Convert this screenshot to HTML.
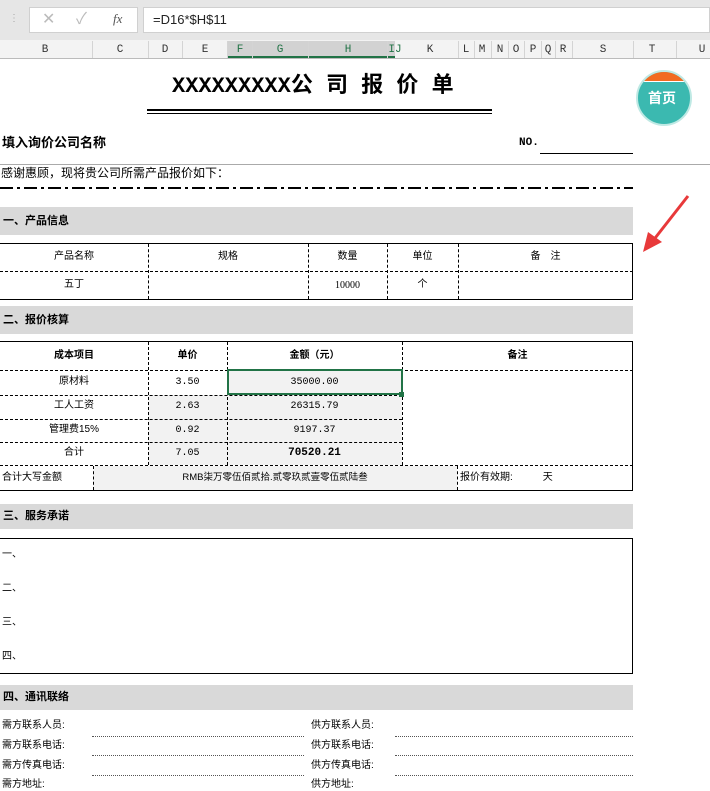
<!DOCTYPE html>
<html><head><meta charset="utf-8"><style>
*{margin:0;padding:0;box-sizing:border-box}
body{width:710px;height:791px;overflow:hidden;background:#fff;position:relative;font-family:"Liberation Sans","Noto Sans CJK SC",sans-serif;font-size:11px;color:#000}
.a{position:absolute}
.t{position:absolute;white-space:nowrap;line-height:1}
.sec{position:absolute;left:0;width:633px;background:#d9d9d9;font-weight:bold;font-size:11px;padding-left:3px}
.hd{position:absolute;top:44px;font-family:"Liberation Mono",monospace;font-size:11px;color:#333;transform:translateX(-50%)}
.sp{position:absolute;top:41px;height:17px;border-left:1px solid #d4d4d4}
.vd{position:absolute;border-left:1px dashed #000}
.hdl{position:absolute;border-top:1px dashed #000}
.c{position:absolute;text-align:center;font-size:10px;line-height:1}
.ul{position:absolute;border-top:1px dotted #555}
</style></head><body>
<div class="a" style="left:0;top:0;width:710px;height:40px;background:#e6e6e6"></div>
<div class="a" style="left:29px;top:7px;width:109px;height:26px;background:#fff;border:1px solid #d0d0d0"></div>
<div class="t" style="left:42px;top:12px;font-size:16px;color:#bbb">✕</div>
<div class="t" style="left:76px;top:12px;font-size:16px;color:#bbb">✓</div>
<div class="t" style="left:113px;top:12px;font-size:13px;font-style:italic;font-family:'Liberation Serif',serif;color:#555">fx</div>
<div class="a" style="left:143px;top:7px;width:567px;height:26px;background:#fff;border:1px solid #d0d0d0"></div>
<div class="t" style="left:153px;top:13px;font-size:13px;color:#222">=D16*$H$11</div>
<div class="t" style="left:9px;top:14px;color:#aaa;font-size:10px">⋮</div>
<div class="a" style="left:0;top:40px;width:710px;height:19px;background:#f3f3f3;border-bottom:1px solid #bbb"></div>
<div class="a" style="left:227px;top:41px;width:168px;height:17px;background:#d2d2d2;border-bottom:2px solid #217346"></div>
<div class="sp" style="left:92px"></div><div class="sp" style="left:148px"></div><div class="sp" style="left:182px"></div><div class="sp" style="left:227px"></div><div class="sp" style="left:252px"></div><div class="sp" style="left:308px"></div><div class="sp" style="left:387px"></div><div class="sp" style="left:458px"></div><div class="sp" style="left:474px"></div><div class="sp" style="left:491px"></div><div class="sp" style="left:508px"></div><div class="sp" style="left:524px"></div><div class="sp" style="left:541px"></div><div class="sp" style="left:555px"></div><div class="sp" style="left:572px"></div><div class="sp" style="left:633px"></div><div class="sp" style="left:676px"></div>
<div class="hd" style="left:45px">B</div><div class="hd" style="left:120px">C</div><div class="hd" style="left:165px">D</div><div class="hd" style="left:205px">E</div><div class="hd" style="left:240px;color:#217346">F</div><div class="hd" style="left:280px;color:#217346">G</div><div class="hd" style="left:348px;color:#217346">H</div><div class="hd" style="left:395px;color:#217346">IJ</div><div class="hd" style="left:430px">K</div><div class="hd" style="left:466px">L</div><div class="hd" style="left:482px">M</div><div class="hd" style="left:500px">N</div><div class="hd" style="left:516px">O</div><div class="hd" style="left:533px">P</div><div class="hd" style="left:548px">Q</div><div class="hd" style="left:563px">R</div><div class="hd" style="left:603px">S</div><div class="hd" style="left:652px">T</div><div class="hd" style="left:702px">U</div>
<div class="t" style="left:172px;top:76px;font-size:22px;font-weight:bold;font-family:'Liberation Mono','Noto Sans CJK SC',monospace">XXXXXXXXX公 司 报 价 单</div>
<div class="a" style="left:147px;top:109px;width:345px;height:5px;border-top:2px solid #000;border-bottom:1px solid #000"></div>
<div class="a" style="left:636px;top:70px;width:56px;height:56px;border-radius:50%;background:#3bb9b0;border:2px solid #bfe9e4;overflow:hidden">
<div class="a" style="left:0;top:0;width:56px;height:10px;background:#f26b21;border-bottom:1px solid #fff"></div></div>
<div class="t" style="left:648px;top:91px;font-size:14px;font-weight:bold;color:#fff">首页</div>
<div class="t" style="left:2px;top:136px;font-size:13px;font-weight:bold">填入询价公司名称</div>
<div class="t" style="left:519px;top:138px;font-size:11px;font-weight:bold;font-family:'Liberation Mono',monospace">NO.</div>
<div class="a" style="left:540px;top:153px;width:93px;border-top:1px solid #000"></div>
<div class="a" style="left:0;top:164px;width:710px;border-top:1px solid #aaa"></div>
<div class="t" style="left:1px;top:167px;font-size:12px">感谢惠顾，现将贵公司所需产品报价如下：</div>
<div class="a" style="left:0;top:187px;width:633px;height:2px;background:repeating-linear-gradient(90deg,#000 0 13px,#fff 13px 17px,#000 17px 20px,#fff 20px 24px)"></div>
<div class="sec" style="top:207px;height:28px;line-height:28px">一、产品信息</div>
<div class="a" style="left:0;top:243px;width:633px;height:57px;border:1px solid #000;border-left:none"></div>
<div class="hdl" style="left:0;top:271px;width:633px"></div>
<div class="vd" style="left:148px;top:244px;height:55px"></div><div class="vd" style="left:308px;top:244px;height:55px"></div><div class="vd" style="left:387px;top:244px;height:55px"></div><div class="vd" style="left:458px;top:244px;height:55px"></div>
<div class="c" style="left:0;width:148px;top:252px">产品名称</div><div class="c" style="left:148px;width:160px;top:252px">规格</div><div class="c" style="left:308px;width:79px;top:252px">数量</div><div class="c" style="left:387px;width:71px;top:252px">单位</div><div class="c" style="left:458px;width:175px;top:252px">备　注</div>
<div class="c" style="left:0;width:148px;top:280px">五丁</div><div class="c" style="left:308px;width:79px;top:281px;font-family:'Liberation Serif',serif">10000</div><div class="c" style="left:387px;width:71px;top:280px">个</div>
<svg class="a" style="left:640px;top:192px" width="52" height="64"><line x1="48" y1="4" x2="12" y2="50" stroke="#e8393a" stroke-width="3"/><polygon points="3,60 8,40 22,50" fill="#e8393a"/></svg>
<div class="sec" style="top:306px;height:28px;line-height:28px">二、报价核算</div>
<div class="a" style="left:148px;top:395px;width:254px;height:70px;background:#f2f2f2"></div>
<div class="a" style="left:227px;top:370px;width:175px;height:25px;background:#f2f2f2"></div>
<div class="a" style="left:93px;top:466px;width:364px;height:24px;background:#f2f2f2"></div>
<div class="a" style="left:0;top:341px;width:633px;height:150px;border:1px solid #000;border-left:none"></div>
<div class="hdl" style="left:0;top:370px;width:633px"></div><div class="hdl" style="left:0;top:395px;width:402px"></div><div class="hdl" style="left:0;top:419px;width:402px"></div><div class="hdl" style="left:0;top:442px;width:402px"></div><div class="hdl" style="left:0;top:465px;width:633px"></div>
<div class="vd" style="left:148px;top:342px;height:123px"></div><div class="vd" style="left:227px;top:342px;height:123px"></div><div class="vd" style="left:402px;top:342px;height:123px"></div>
<div class="vd" style="left:93px;top:466px;height:24px"></div><div class="vd" style="left:457px;top:466px;height:24px"></div>
<div class="a" style="left:227px;top:369px;width:176px;height:26px;border:2px solid #217346"></div>
<div class="a" style="left:399px;top:392px;width:5px;height:5px;background:#217346"></div>
<div class="c" style="left:0;width:148px;top:351px;font-weight:bold">成本项目</div><div class="c" style="left:148px;width:79px;top:351px;font-weight:bold">单价</div><div class="c" style="left:227px;width:175px;top:351px;font-weight:bold">金额（元）</div><div class="c" style="left:402px;width:231px;top:351px;font-weight:bold">备注</div>
<div class="c" style="left:0;width:148px;top:377px">原材料</div><div class="c" style="left:0;width:148px;top:401px">工人工资</div><div class="c" style="left:0;width:148px;top:425px">管理费15%</div><div class="c" style="left:0;width:148px;top:448px">合计</div>
<div class="c" style="left:148px;width:79px;top:378px;font-family:'Liberation Mono',monospace">3.50</div><div class="c" style="left:148px;width:79px;top:402px;font-family:'Liberation Mono',monospace">2.63</div><div class="c" style="left:148px;width:79px;top:426px;font-family:'Liberation Mono',monospace">0.92</div><div class="c" style="left:148px;width:79px;top:449px;font-family:'Liberation Mono',monospace">7.05</div>
<div class="c" style="left:227px;width:175px;top:378px;font-family:'Liberation Mono',monospace">35000.00</div><div class="c" style="left:227px;width:175px;top:402px;font-family:'Liberation Mono',monospace">26315.79</div><div class="c" style="left:227px;width:175px;top:426px;font-family:'Liberation Mono',monospace">9197.37</div><div class="c" style="left:227px;width:175px;top:448px;font-family:'Liberation Mono',monospace;font-weight:bold;font-size:11px">70520.21</div>
<div class="t" style="left:2px;top:473px;font-size:10px">合计大写金额</div>
<div class="c" style="left:93px;width:364px;top:473px;font-size:9.5px">RMB柒万零伍佰贰拾.贰零玖贰壹零伍贰陆叁</div>
<div class="t" style="left:460px;top:473px;font-size:10px">报价有效期:　　　天</div>
<div class="sec" style="top:504px;height:25px;line-height:25px">三、服务承诺</div>
<div class="a" style="left:0;top:538px;width:633px;height:136px;border:1px solid #000;border-left:none"></div>
<div class="t" style="left:2px;top:550px;font-size:10px">一、</div><div class="t" style="left:2px;top:584px;font-size:10px">二、</div><div class="t" style="left:2px;top:618px;font-size:10px">三、</div><div class="t" style="left:2px;top:652px;font-size:10px">四、</div>
<div class="sec" style="top:685px;height:25px;line-height:25px">四、通讯联络</div>
<div class="t" style="left:2px;top:721px;font-size:10px">需方联系人员:</div><div class="t" style="left:2px;top:741px;font-size:10px">需方联系电话:</div><div class="t" style="left:2px;top:761px;font-size:10px">需方传真电话:</div><div class="t" style="left:2px;top:780px;font-size:10px">需方地址:</div>
<div class="t" style="left:311px;top:721px;font-size:10px">供方联系人员:</div><div class="t" style="left:311px;top:741px;font-size:10px">供方联系电话:</div><div class="t" style="left:311px;top:761px;font-size:10px">供方传真电话:</div><div class="t" style="left:311px;top:780px;font-size:10px">供方地址:</div>
<div class="ul" style="left:92px;top:736px;width:212px"></div><div class="ul" style="left:92px;top:755px;width:212px"></div><div class="ul" style="left:92px;top:775px;width:212px"></div>
<div class="ul" style="left:395px;top:736px;width:238px"></div><div class="ul" style="left:395px;top:755px;width:238px"></div><div class="ul" style="left:395px;top:775px;width:238px"></div>
</body></html>
